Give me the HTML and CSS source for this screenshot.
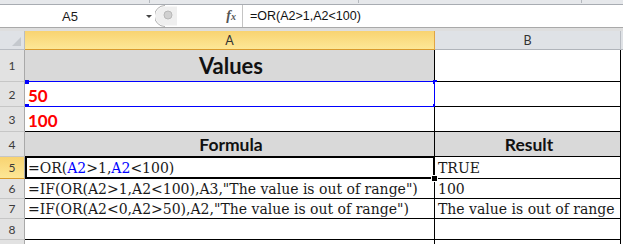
FILE: index.html
```html
<!DOCTYPE html>
<html lang="en">
<head>
    <meta charset="UTF-8">
    <title>OR function</title>
    <link rel="stylesheet" href="styles.css">
</head>
<body>
    <div class="ribbon"><span class="r1"></span><span class="r2"></span><span class="r3"></span></div>
    <div class="fbar">
        <div class="namebox"><span class="ref">A5</span><i class="caret"></i></div>
        <div class="grip">
            <svg width="22" height="22" viewBox="0 0 22 22">
                <path d="M10 0.5 A10.5 10.5 0 0 0 10 21.5" fill="none" stroke="#b0b0b0"/>
                <path d="M10 1.5 A9.5 9.5 0 0 0 10 20.5 L22 20.5 L22 1.5 Z" fill="#efefef"/>
                <circle cx="13" cy="10" r="4" fill="#d0d0d0" stroke="#b8b8b8"/>
            </svg>
        </div>
        <div class="fx">f<sub>x</sub></div>
        <div class="formula">=OR(A2&gt;1,A2&lt;100)</div>
    </div>
    <div class="gap"></div>

    <div class="sheet">
        <div class="corner"><i></i></div>
        <div class="colhead sel">A</div>
        <div class="colhead">B</div>
        <div class="colhead end"></div>

        <div class="rowhead">1</div>
        <div class="cell title grey">Values</div>
        <div class="cell"></div>
        <div class="fill"></div>

        <div class="rowhead">2</div>
        <div class="cell val picked">50
            <span class="handle tl"></span><span class="handle bl"></span>
            <span class="handle tr"></span><span class="handle br"></span>
        </div>
        <div class="cell"></div>
        <div class="fill"></div>

        <div class="rowhead">3</div>
        <div class="cell val">100</div>
        <div class="cell"></div>
        <div class="fill"></div>

        <div class="rowhead">4</div>
        <div class="cell head grey">Formula</div>
        <div class="cell head grey">Result</div>
        <div class="fill"></div>

        <div class="rowhead sel">5</div>
        <div class="cell txt active">=OR(<span class="ref-a">A2</span>&gt;1,<span class="ref-a">A2</span>&lt;100)</div>
        <div class="cell txt">TRUE</div>
        <div class="fill"></div>

        <div class="rowhead">6</div>
        <div class="cell txt">=IF(OR(A2&gt;1,A2&lt;100),A3,"The value is out of range")</div>
        <div class="cell txt">100</div>
        <div class="fill"></div>

        <div class="rowhead">7</div>
        <div class="cell txt">=IF(OR(A2&lt;0,A2&gt;50),A2,"The value is out of range")</div>
        <div class="cell txt">The value is out of range</div>
        <div class="fill"></div>

        <div class="rowhead">8</div>
        <div class="cell"></div>
        <div class="cell"></div>
        <div class="fill"></div>

        <div class="rowhead last"></div>
        <div class="cell"></div>
        <div class="cell"></div>
        <div class="fill"></div>
    </div>
</body>
</html>
```

FILE: styles.css
```css
body {
    margin: 0;
    width: 623px;
    height: 244px;
    overflow: hidden;
    background: #e4e4e4;
    font-family: Lato, "Liberation Sans", sans-serif;
}
.ribbon {
    display: flex;
    height: 5px;
    background: #e6e8eb;
    border-bottom: 1px solid #a8acb2;
    box-sizing: border-box;
}
.ribbon span {
    border-right: 1px solid #b4b8be;
    height: 3px;
}
.r1 { width: 149px; }
.r2 { width: 208px; }
.r3 { width: 222px; }
.fbar {
    display: flex;
    height: 23px;
    background: #fff;
    border-bottom: 1px solid #a9a9a9;
    box-sizing: border-box;
}
.namebox {
    width: 155px;
    display: flex;
    align-items: center;
}
.namebox .ref {
    width: 140px;
    text-align: center;
    font-family: "Liberation Sans", sans-serif;
    font-size: 13px;
    color: #1a1a1a;
}
.caret {
    margin-left: 6px;
    width: 0;
    height: 0;
    border-left: 3px solid transparent;
    border-right: 3px solid transparent;
    border-top: 3px solid #444;
}
.grip {
    width: 22px;
    display: flex;
    align-items: center;
}
.fx {
    width: 66px;
    box-sizing: border-box;
    border-right: 1px solid #c4c4c4;
    text-align: right;
    padding-right: 6px;
    font-family: "Liberation Serif", serif;
    font-style: italic;
    font-weight: bold;
    font-size: 14px;
    color: #555;
    line-height: 21px;
}
.fx sub {
    font-size: 10px;
    vertical-align: 0;
}
.formula {
    padding-left: 7px;
    font-family: "Liberation Sans", sans-serif;
    font-size: 12.5px;
    color: #111;
    line-height: 22px;
}
.gap {
    height: 3px;
    background: #dedede;
}
.sheet {
    display: grid;
    grid-template-columns: 25px 410px 186px 1fr;
    grid-template-rows: 19px 32px 25px 25px 25px 22px 20px 20px 21px 10px;
}
.corner {
    background: #dfe2e6;
    border-right: 1px solid #b9bdc3;
    border-bottom: 1px solid #b9bdc3;
    position: relative;
}
.corner i {
    position: absolute;
    right: 3px;
    bottom: 3px;
    width: 0;
    height: 0;
    border-left: 9px solid transparent;
    border-bottom: 9px solid #c4c8cd;
}
.colhead {
    background: #dfe2e6;
    border-right: 1px solid #b9bdc3;
    border-bottom: 1px solid #b0b4ba;
    display: flex;
    align-items: center;
    justify-content: center;
    font-size: 12.5px;
    color: #333;
}
.colhead.sel {
    background: linear-gradient(#f8d371, #fde796);
    border-right-color: #e1a544;
    border-bottom-color: #d99a2c;
}
.colhead.end {
    border-right: none;
}
.rowhead {
    background: #e2e2e2;
    border-right: 1px solid #a9a9a9;
    border-bottom: 1px solid #c6c6c6;
    display: flex;
    align-items: center;
    justify-content: center;
    font-size: 12px;
    color: #3b3b3b;
}
.rowhead.sel {
    background: linear-gradient(#f8d371, #fde796);
    border-bottom-color: #d99a2c;
}
.rowhead.last {
    border-bottom: none;
}
.cell {
    background: #fff;
    border-right: 1px solid #000;
    border-bottom: 1px solid #000;
    display: flex;
    align-items: center;
    padding-left: 3px;
    white-space: nowrap;
    overflow: visible;
    position: relative;
}
.fill {
    background: #fff;
}
.grey {
    background: #d9d9d9;
}
.title {
    justify-content: center;
    font-weight: bold;
    font-size: 22px;
    color: #111;
    border-bottom-color: #0000ff;
}
.head {
    justify-content: center;
    font-weight: bold;
    font-size: 17.5px;
    color: #111;
}
.val {
    font-weight: bold;
    font-size: 17px;
    color: #ff0000;
    padding-top: 2px;
}
.picked {
    border-bottom-color: #0000ff;
    border-right-color: #0000ff;
}
.handle {
    position: absolute;
    width: 4px;
    height: 4px;
    background: #0000ff;
}
.handle.tl { left: 0; top: -2px; }
.handle.bl { left: 0; bottom: -2px; }
.handle.tr { right: -3px; top: -2px; }
.handle.br { right: -3px; bottom: -2px; }
.txt {
    font-family: "DejaVu Serif", "Liberation Serif", serif;
    font-size: 14px;
    color: #1a1a1a;
}
.ref-a {
    color: #0000ff;
}
.active {
    box-shadow: inset 2px 1px 0 #000, inset -1px -1px 0 #000;
}
.active::after {
    content: "";
    position: absolute;
    right: -4px;
    bottom: -4px;
    width: 5px;
    height: 5px;
    background: #000;
    border: 1px solid #fff;
    z-index: 2;
}
```
